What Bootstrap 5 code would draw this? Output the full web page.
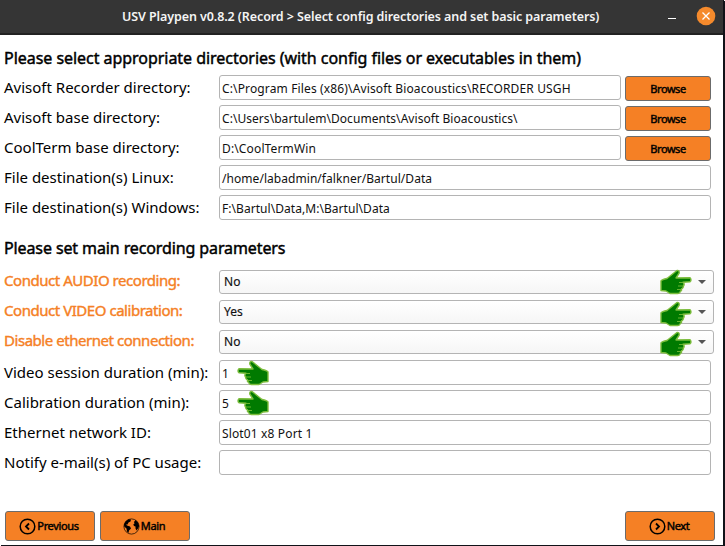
<!DOCTYPE html>
<html lang="en">
<head>
<meta charset="utf-8">
<title>USV Playpen v0.8.2</title>
<link href="https://cdn.jsdelivr.net/npm/bootstrap@5.3.0/dist/css/bootstrap.min.css" rel="stylesheet">
<style>
body{width:725px;height:546px;overflow:hidden;background:#fff;color:#000;font-family:"Noto Sans","Open Sans",sans-serif;white-space:nowrap}
.window{width:724px;height:545px;border-right:1px solid #111218;box-shadow:1px 1px 0 #111218}
.titlebar{height:35px;background:#353535;border-bottom:2px solid #222;color:#f4f4f4}
.window-title{font:600 12.5px/33px "Noto Sans",sans-serif;letter-spacing:-.09px;margin-left:122px;width:478px}
.heading{font-size:16px;-webkit-text-stroke:.45px #000;padding-left:4px;letter-spacing:-.04px}
.h-top{height:38px;line-height:46px}
.h-mid{height:45px;line-height:50px;letter-spacing:-.11px}
.form-line{height:30px;padding:2px 0 0 4px}
.caption{width:215px;font-size:15px;line-height:25px;letter-spacing:0}
.caption.key{color:#f58025;-webkit-text-stroke:.4px #f58025;letter-spacing:-.46px;line-height:21px}
.field{height:25px;border:1px solid #b4b4b4;border-radius:3px;background:#fff;font-size:12px;line-height:25px;padding-left:2px;position:relative;color:#111;letter-spacing:.05px}
.field.roomy{letter-spacing:.14px}
.w-short{width:402px}.w-wide{width:492px}
.field.combo{width:495px;height:24px;background:linear-gradient(#fff,#f6f6f6);padding-left:4px;line-height:22px;-webkit-text-stroke:.15px #111}
.arrow{position:absolute;right:7px;top:9px;border:4px solid transparent;border-top:4px solid #555;border-bottom:0}
.act{background:#f58025;border:1px solid #6b6b6b;border-radius:3px;font-size:11px;-webkit-text-stroke:.45px #000;color:#000;padding:0}
.browse{width:86px;height:25px;margin:1px 0 0 4px;line-height:24px;letter-spacing:-.45px}
.nav-act{width:90px;height:30px;gap:1px;letter-spacing:-.35px;padding-right:2px;line-height:30px}
.nav-act svg{-webkit-text-stroke:0}
.hand{position:absolute;width:32px;height:26px}
.hand-r{left:440px;top:-2px}.hand-r.low{top:0}
.hand-l{left:17px;top:-1px;transform:scaleX(-1)}
.footer-bar{margin-top:33px;padding-left:5px;padding-right:8px;gap:5px}
</style>
<script src="https://cdn.jsdelivr.net/npm/bootstrap@5.3.0/dist/js/bootstrap.bundle.min.js"></script>
</head>
<body>
<svg class="d-none">
<symbol id="hand" viewBox="0 0 32 26"><path d="M1 12Q2 10.500 7 9.500L17 1.500Q19.500 1 19.200 4L16 9 30 8.800Q32 11 30 12.800L23 13.300Q25 15 23.500 17Q23.500 19 21.500 20Q22 22 20.500 22Q20 24.800 17 24.500L10 24.500 6 22 1 21.500Z" fill="#007a00" stroke="#7cbd3c" stroke-width="1.400" stroke-linejoin="round"/><path d="M19 13.500H23M18 17H23M17 20.500H21" stroke="#67b32e" stroke-width="1"/></symbol>
</svg>
<div class="window d-flex flex-column">
<header class="titlebar d-flex flex-shrink-0">
<div class="window-title">USV Playpen v0.8.2 (Record &gt; Select config directories and set basic parameters)</div>
<svg width="60" height="33" class="ms-auto"><path d="M5 18.500h8" stroke="#fff"/><circle cx="43" cy="16" r="9.300" fill="#f58a2c"/><path d="M39.500 12.500l7 7m0-7l-7 7" stroke="#fff" stroke-width="1.300"/></svg>
</header>
<main>
<div class="heading h-top">Please select appropriate directories (with config files or executables in them)</div>
<div class="form-line d-flex"><div class="caption">Avisoft Recorder directory:</div><div class="field w-short roomy">C:\Program Files (x86)\Avisoft Bioacoustics\RECORDER USGH</div><button class="act browse">Browse</button></div>
<div class="form-line d-flex"><div class="caption">Avisoft base directory:</div><div class="field w-short">C:\Users\bartulem\Documents\Avisoft Bioacoustics\</div><button class="act browse">Browse</button></div>
<div class="form-line d-flex"><div class="caption">CoolTerm base directory:</div><div class="field w-short roomy">D:\CoolTermWin</div><button class="act browse">Browse</button></div>
<div class="form-line d-flex"><div class="caption">File destination(s) Linux:</div><div class="field w-wide">/home/labadmin/falkner/Bartul/Data</div></div>
<div class="form-line d-flex"><div class="caption">File destination(s) Windows:</div><div class="field w-wide">F:\Bartul\Data,M:\Bartul\Data</div></div>
<div class="heading h-mid">Please set main recording parameters</div>
<div class="form-line d-flex"><div class="caption key">Conduct AUDIO recording:</div><div class="field combo">No<svg class="hand hand-r"><use href="#hand"/></svg><i class="arrow"></i></div></div>
<div class="form-line d-flex"><div class="caption key">Conduct VIDEO calibration:</div><div class="field combo">Yes<svg class="hand hand-r low"><use href="#hand"/></svg><i class="arrow"></i></div></div>
<div class="form-line d-flex"><div class="caption key">Disable ethernet connection:</div><div class="field combo">No<svg class="hand hand-r low"><use href="#hand"/></svg><i class="arrow"></i></div></div>
<div class="form-line d-flex"><div class="caption">Video session duration (min):</div><div class="field w-wide">1<svg class="hand hand-l"><use href="#hand"/></svg></div></div>
<div class="form-line d-flex"><div class="caption">Calibration duration (min):</div><div class="field w-wide">5<svg class="hand hand-l"><use href="#hand"/></svg></div></div>
<div class="form-line d-flex"><div class="caption">Ethernet network ID:</div><div class="field w-wide roomy">Slot01 x8 Port 1</div></div>
<div class="form-line d-flex"><div class="caption">Notify e-mail(s) of PC usage:</div><div class="field w-wide"></div></div>
</main>
<footer class="footer-bar d-flex">
<button class="act nav-act d-flex align-items-center justify-content-center"><svg width="17" height="17" fill="none" stroke="#000" stroke-width="1.500"><circle cx="8.500" cy="8.500" r="7.300"/><path d="M10 5.500 7 8.500l3 3" stroke-width="1.800"/></svg>Previous</button>
<button class="act nav-act d-flex align-items-center justify-content-center"><svg width="17" height="17"><circle cx="8.500" cy="8.500" r="7.600" fill="none" stroke="#000" stroke-width=".7"/><path d="M1 6.500 2.500 3.500 5.500 1.200 8 1.500 7.500 3.500 5.500 4.500 4.500 6.500 3 6.500 4 7.500 7 8.500 8 10.500 6 12.500 5.500 15 4 13.500 3.500 10.500 1.200 8.500ZM11 4 12.500 2 15 4.500 16.200 8 15 10.500 13.500 12.500 12.500 10.500 12.500 8.500 11 8 10.300 6.500 11.500 5.500Z"/></svg>Main</button>
<button class="act nav-act d-flex align-items-center justify-content-center ms-auto"><svg width="17" height="17" fill="none" stroke="#000" stroke-width="1.500"><circle cx="8.500" cy="8.500" r="7.300"/><path d="M7 5.500l3 3-3 3" stroke-width="1.800"/></svg>Next</button>
</footer>
</div>
</body>
</html>
